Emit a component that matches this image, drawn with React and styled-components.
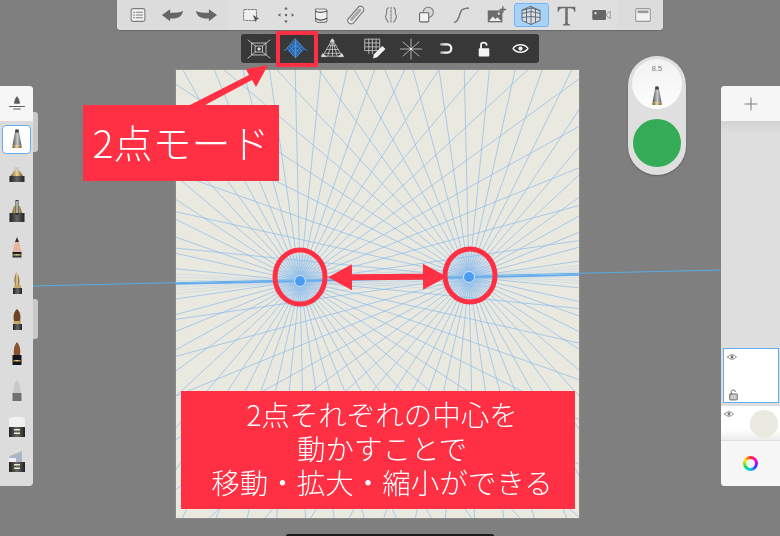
import React from "react";
import styled, { createGlobalStyle } from "styled-components";

const GlobalStyle = createGlobalStyle`
  html, body { margin: 0; padding: 0; background: #7f7f7f; }
`;

const RED = "#ff3044";
const GUIDE = "#8dbcec";

// paper local coordinates of the two vanishing points
const POINTS = [
  [124, 211],
  [293, 207],
];
const TILT = -1.3;

const ray = ([x, y], degrees, length) => {
  const a = ((degrees + TILT) * Math.PI) / 180;
  return `M${x} ${y}L${(x + Math.cos(a) * length).toFixed(1)} ${(y + Math.sin(a) * length).toFixed(1)}`;
};

const rayPath = (point, step, length) => {
  let d = "";
  const count = Math.round(360 / step);
  for (let i = 0; i < count; i++) d += ray(point, i * step, length);
  return d;
};

// the tight bundle along the horizon
const horizonFan = (point, length) => {
  let d = "";
  [-4.5, -3, -1.5, 1.5, 3, 4.5].forEach((a) => {
    d += ray(point, a, length) + ray(point, 180 + a, length);
  });
  return d;
};

const Stage = styled.div`
  position: relative;
  width: 780px;
  height: 536px;
  overflow: hidden;
  background: #7f7f7f;
  font-family: "Liberation Sans", "Noto Sans CJK JP", sans-serif;
  filter: blur(0.35px);
`;

const TopBar = styled.div`
  display: flex;
  width: 546px;
  height: 30px;
  margin: 0 auto 4px;
  border-radius: 0 0 4px 4px;
  background: #dfdfdf;
  box-shadow: 0 1px 1px rgba(0, 0, 0, 0.18);
  overflow: hidden;
`;

const BarGroup = styled.div`
  display: flex;
  align-items: center;
  width: ${(p) => p.$width}px;
  padding-left: ${(p) => p.$inset}px;
  box-sizing: border-box;
  background: ${(p) => (p.$shade ? "#dcdcdc" : "transparent")};
`;

const ToolButton = styled.div`
  display: flex;
  align-items: center;
  justify-content: center;
  flex: none;
  width: ${(p) => p.$size}px;
  height: 24px;
  box-sizing: border-box;
  border-radius: 3px;
  border: 1px solid ${(p) => (p.$active ? "#6fb4f3" : "transparent")};
  background: ${(p) => (p.$active ? "#a9d2f8" : "transparent")};
`;

const Workspace = styled.div`
  display: flex;
  align-items: flex-start;
`;

const SidePanel = styled.div`
  position: relative;
  z-index: 2;
  flex: none;
  width: ${(p) => p.$width}px;
  height: 400px;
  margin-top: 52px;
  margin-left: ${(p) => (p.$right ? "auto" : 0)};
  display: flex;
  flex-direction: column;
  background: #dcdcdc;
  border-radius: ${(p) => (p.$right ? "4px 0 0 4px" : "0 4px 4px 0")};
`;

const PanelHead = styled.div`
  display: flex;
  align-items: center;
  justify-content: center;
  height: 35px;
  flex: none;
  background: #f6f6f6;
  border-radius: inherit;
  border-bottom-left-radius: 0;
  border-bottom-right-radius: 0;
`;

const Grip = styled.div`
  position: absolute;
  left: 100%;
  top: ${(p) => p.$top}px;
  width: 5px;
  height: 40px;
  background: #c9c9c9;
  border-radius: 0 3px 3px 0;
`;

const NibList = styled.div`
  display: flex;
  flex-direction: column;
  align-items: center;
  padding-top: 3px;
`;

const NibSlot = styled.div`
  display: flex;
  align-items: center;
  justify-content: center;
  width: 29px;
  height: ${(p) => (p.$selected ? 29 : 35.7)}px;
  margin-top: ${(p) => (p.$selected ? 1 : 0)}px;
  margin-bottom: ${(p) => (p.$selected ? 4 : 0)}px;
  box-sizing: border-box;
  border-radius: 4px;
  border: ${(p) => (p.$selected ? "1.5px solid #62aef3" : "none")};
  background: ${(p) => (p.$selected ? "#fff" : "transparent")};
`;

const CenterColumn = styled.div`
  flex: none;
  width: 403px;
  margin-left: 143px;
`;

const ModeBar = styled.div`
  display: flex;
  align-items: center;
  width: 298px;
  height: 29px;
  margin-left: 65px;
  background: #383838;
  border-radius: 3px;
`;

const ModeButton = styled.div`
  position: relative;
  flex: none;
  width: 36.6px;
  height: 100%;
  display: flex;
  align-items: center;
  justify-content: center;
  &:nth-child(4) {
    margin-left: 5px;
  }
`;

const ModeMark = styled.div`
  position: absolute;
  left: -2px;
  right: -4px;
  top: -3px;
  bottom: -4px;
  z-index: 3;
  border: 4.5px solid ${RED};
`;

const Paper = styled.div`
  position: relative;
  width: 403px;
  height: 448px;
  margin-top: 7px;
  background: #eae9e0;
  box-shadow: 0 0 0 1px rgba(150, 150, 150, 0.5);
`;

const Guides = styled.svg`
  position: absolute;
  left: 0;
  top: 0;
  overflow: visible;
`;

const Puck = styled.div`
  flex: none;
  width: 58px;
  height: 119px;
  margin-left: 49px;
  margin-top: 22px;
  padding: 3px 4px;
  box-sizing: border-box;
  border-radius: 29px;
  background: #dfdfdf;
  box-shadow: 0 1px 2px rgba(0, 0, 0, 0.25);
  display: flex;
  flex-direction: column;
  align-items: center;
`;

const SizeDial = styled.div`
  width: 50px;
  height: 50px;
  flex: none;
  border-radius: 50%;
  background: linear-gradient(#f2f2f2, #fdfdfd);
  overflow: hidden;
  display: flex;
  flex-direction: column;
  align-items: center;
  gap: 9px;
`;

const SizeText = styled.div`
  font-size: 7.5px;
  line-height: 9px;
  margin-top: 5px;
  color: #777;
`;

const ColorDot = styled.div`
  width: 48px;
  height: 48px;
  flex: none;
  margin-top: 10px;
  border-radius: 50%;
  background: #34ab57;
`;

const LayerStack = styled.div`
  flex: 1;
  display: flex;
  flex-direction: column;
  justify-content: flex-end;
  background: linear-gradient(#d2d2d2, #dedede 12px);
`;

const Layer = styled.div`
  position: relative;
  height: ${(p) => p.$height}px;
  margin-left: ${(p) => (p.$active ? 2 : 0)}px;
  margin-right: ${(p) => (p.$active ? 1 : 0)}px;
  margin-bottom: ${(p) => (p.$active ? 3 : 1)}px;
  box-sizing: border-box;
  background: ${(p) => (p.$active ? "#fff" : "linear-gradient(#fff 70%, #ececec)")};
  border: ${(p) => (p.$active ? "1.5px solid #62aef3" : "none")};
  display: flex;
  flex-direction: column;
  justify-content: space-between;
  padding: 3px 0 1px 3px;
`;

const Swatch = styled.div`
  position: absolute;
  right: 2px;
  top: 4px;
  width: 28px;
  height: 28px;
  border-radius: 50%;
  background: #eae9e0;
`;

const PanelFoot = styled.div`
  height: 45px;
  flex: none;
  display: flex;
  align-items: center;
  justify-content: center;
  background: #f7f7f7;
  border-bottom-left-radius: 4px;
`;

const Wheel = styled.div`
  width: 15px;
  height: 15px;
  border-radius: 50%;
  background: conic-gradient(#ff2a2a, #ff00d4, #4a2cff, #00c8ff, #18d848, #ffe600, #ff2a2a);
  display: flex;
  align-items: center;
  justify-content: center;
  &::after {
    content: "";
    width: 9px;
    height: 9px;
    border-radius: 50%;
    background: #f7f7f7;
  }
`;

const Annotations = styled.svg`
  position: absolute;
  left: 0;
  top: 0;
  z-index: 3;
  pointer-events: none;
`;

const Callout = styled.div`
  position: absolute;
  z-index: 4;
  left: ${(p) => p.$left}px;
  top: ${(p) => p.$top}px;
  width: ${(p) => p.$width}px;
  height: ${(p) => p.$height}px;
  padding: 0 0 5px ${(p) => p.$shift || 0}px;
  box-sizing: border-box;
  display: flex;
  flex-direction: column;
  align-items: center;
  justify-content: center;
  background: ${RED};
  color: #fff;
  font-family: "Noto Sans CJK JP", "Liberation Sans", sans-serif;
  font-size: ${(p) => p.$size}px;
  font-weight: 300;
  line-height: ${(p) => p.$leading}px;
  white-space: nowrap;
`;

const HomeBar = styled.div`
  position: absolute;
  left: 286px;
  bottom: 0;
  width: 208px;
  height: 2px;
  border-radius: 2px 2px 0 0;
  background: #1c1c1c;
`;

const Icon = ({ children, size = 22, fill = "none", stroke = "#7c7c7c", width = 1.2 }) => (
  <svg width={size} height={size} viewBox="0 0 24 24" fill={fill} stroke={stroke} strokeWidth={width} strokeLinecap="round" strokeLinejoin="round">
    {children}
  </svg>
);

const topLeftIcons = [
  <Icon key="list">
    <rect x="4.5" y="5" width="15" height="14" rx="2" fill="#f2f2f2" />
    <path d="M7 9h1.2M10 9h7M7 12h1.2M10 12h7M7 15h1.2M10 15h7" />
  </Icon>,
  <Icon key="undo" fill="#666" stroke="none" size={23}>
    <path d="M1 11.5L9.5 5.5V9.2C15 9.200 20 9 23 7C22 13.500 17 15.600 9.500 15V18Z" />
  </Icon>,
  <Icon key="redo" fill="#666" stroke="none" size={23}>
    <path d="M23 11.500L14.500 5.500V9.200C9 9.200 4 9 1 7C2 13.500 7 15.600 14.500 15V18Z" />
  </Icon>,
];

const toolIcons = [
  <Icon key="select">
    <rect x="4" y="6" width="14" height="12" rx="1.500" fill="#efefef" strokeDasharray="2 1.600" />
    <path d="M14 12l7 4-3 1-1 3z" fill="#555" stroke="none" />
  </Icon>,
  <Icon key="move" fill="#666" stroke="none">
    <circle cx="12" cy="12" r="1.300" />
    <path d="M12 3l2 3h-4zM12 21l2-3h-4zM3 12l3-2v4zM21 12l-3-2v4z" />
  </Icon>,
  <Icon key="stack">
    <path d="M6 5.500h10c1.500 0 2.500 1 2.500 2.500v9.500c0 1.500-1 2.500-3 2.500h-6.500c-2 0-3-1-3-2.500z" fill="#eee" />
    <path d="M6 8c3 1.500 7 1.500 12.500 0M6 15.500c3 2.500 8 2.500 12.500 0" stroke="#555" />
  </Icon>,
  <Icon key="ruler" size={24}>
    <path d="M4 16L15 3.500c2.500-1.500 6 1.500 4.500 4.500L9 20.500c-3 1.500-6.500-1.500-5-4.500z" fill="#e8e8e8" strokeDasharray="2 1" />
    <path d="M7.500 16.500L16 7" stroke="#a8a8a8" strokeWidth="3" />
  </Icon>,
  <Icon key="symmetry">
    <path d="M12 3.500v17" strokeDasharray="2 1.500" />
    <path d="M9 4C5 6 9 9 6.500 12C4.500 15 8.500 18 9 20M15 4c4 2 0 5 2.500 8c2 3-2 6-2.500 8" />
  </Icon>,
  <Icon key="shapes">
    <circle cx="14.500" cy="9" r="5.500" fill="#d8d8d8" />
    <rect x="5" y="9.500" width="10" height="10" rx="1" fill="#f4f4f4" stroke="#666" />
  </Icon>,
  <Icon key="curve" stroke="#777" width="1.700">
    <path d="M5 20C10 20 10 9 13 6.500C15 5 17 5 20 4.500" />
  </Icon>,
  <Icon key="image" fill="#666" stroke="none">
    <rect x="3" y="7" width="16" height="13" fill="#6d6d6d" />
    <path d="M4.500 18.500l4-5 3 3 2-2 4 4z" fill="#f0f0f0" />
    <circle cx="15" cy="10.500" r="1.200" fill="#f0f0f0" />
    <path d="M19.500 3v6M16.500 6h6" stroke="#666" strokeWidth="1.400" />
  </Icon>,
  <Icon key="perspective" stroke="#5f6d78" width="1" size={24}>
    <path d="M12 3.500L21 7.500V17.500L12 21.500L3 17.500V7.500Z" fill="#d8dde0" />
    <path d="M12 3.500V21.500M7.500 5.500V19.500M16.500 5.500V19.500M3 10.500L12 8.500L21 10.500M3 14.500L12 13.500L21 14.500M3 7.500L12 5L21 7.500" />
  </Icon>,
  <Icon key="text" fill="#6d6d6d" stroke="none" size={25}>
    <path d="M3.500 3.500H20.500V8.500H19.500C19 6 18 5 15.500 5H13.200V19C13.200 20 14 20.500 15.500 20.500V21.500H8.500V20.500C10 20.500 10.800 20 10.800 19V5H8.500C6 5 5 6 4.500 8.500H3.500Z" />
  </Icon>,
  <Icon key="video" fill="#666" stroke="none">
    <rect x="2.500" y="6.500" width="15" height="11" rx="1.500" />
    <circle cx="6" cy="10" r="1.200" fill="#eee" />
    <path d="M18.500 11l3.500-3v8l-3.500-3z" fill="#eee" stroke="#777" strokeWidth="0.800" />
  </Icon>,
];

const frameIcon = (
  <Icon key="frame">
    <rect x="4" y="5" width="16" height="14" rx="1.500" fill="#f2f2f2" stroke="#9a9a9a" />
    <rect x="6" y="7" width="12" height="3" fill="#9a9a9a" stroke="none" />
  </Icon>
);

const modeIcons = [
  <Icon key="one" stroke="#d8d8d8" width="0.800" size={24}>
    <rect x="5" y="6" width="14" height="12" />
    <rect x="8.500" y="9" width="7" height="6" />
    <circle cx="12" cy="12" r="1.200" fill="#e6e6e6" />
    <path d="M1 3L8.500 9M23 3L15.500 9M1 21L8.500 15M23 21L15.500 15" />
  </Icon>,
  <Icon key="two" stroke="#4a97e6" width="0.800" size={25}>
    <path d="M12 3L20 12L12 21L4 12Z" fill="#2a5f9a" />
    <path d="M8 7.500L16 16.500M16 7.500L8 16.500M6 9.500L14 18.500M18 9.500L10 18.500M10 5.500L18 14.500M14 5.500L6 14.500M12 3V21M1 14L4 12M23 14L20 12" />
  </Icon>,
  <Icon key="three" stroke="#cfcfcf" width="0.800" size={23}>
    <path d="M12 3L22 20H2Z" />
    <path d="M12 3V20M12 3L7 20M12 3L17 20M8.500 9H15.500M6 13H18M4 17H20" />
    <path d="M12 2l2 2.500h-4zM2 17.500l3.500 3H.5zM22 17.500l1.500 3h-5z" fill="#eee" />
  </Icon>,
  <Icon key="four" stroke="#c8c8c8" width="0.800" size={25}>
    <path d="M3 3H17V14H3ZM3 6.700H17M3 10.400H17M6.500 3V17M10 3V17M13.500 3V14" />
    <path d="M10.500 21.500L11.500 17.500L19.500 9.500L22.500 12.500L14.500 20.500Z" fill="#f2f2f2" stroke="none" />
  </Icon>,
  <Icon key="five" stroke="#cfcfcf" width="0.800" size={24}>
    <path d="M1.500 12H22.500M12 2V22M4 5L20 19M20 5L4 19" />
    <circle cx="12" cy="12" r="1" fill="#fff" stroke="none" />
  </Icon>,
  <Icon key="magnet" stroke="#f2f2f2" width="3.600" size={15}>
    <path d="M6 5.500H12C20 5.500 20 18.500 12 18.500H6" />
    <path d="M2 5.500H5M2 18.500H5" stroke="#c4c4c4" />
  </Icon>,
  <Icon key="lock" fill="#f4f4f4" stroke="none" size={18}>
    <rect x="5" y="11" width="14" height="11" rx="1" />
    <path d="M8 11V6.500C8 2.500 15 2.500 15.500 6.500" fill="none" stroke="#f4f4f4" strokeWidth="2.400" />
  </Icon>,
  <Icon key="eye" stroke="#f4f4f4" width="2" size={17}>
    <path d="M1.500 12C6 5 18 5 22.500 12C18 19 6 19 1.500 12Z" />
    <circle cx="12" cy="12" r="3" fill="#f4f4f4" stroke="none" />
  </Icon>,
];

const SmallEye = () => (
  <Icon size={10} stroke="#777" width="2.200">
    <path d="M1.500 12C6 5 18 5 22.500 12C18 19 6 19 1.500 12Z" />
    <circle cx="12" cy="12" r="3.500" fill="#777" stroke="none" />
  </Icon>
);

const SmallLock = () => (
  <Icon size={13} stroke="#666" width="1.800">
    <rect x="5" y="11" width="14" height="11" rx="1" fill="#ccc" strokeDasharray="2 1.500" />
    <path d="M8 11V6.500C8 2.500 15 2.500 15.500 6.500" />
  </Icon>
);

// one entry per brush, each a list of [path, fill]
const NIBS = [
  [["M10.500 4.500h3l.800 4 2.200 12H7.500l2.200-12z", "url(#metal)"], ["M7.500 20.500h9v2.500h-9z", "url(#gold)"], ["M10.500 4.500h3l.500 3h-4z", "#444"]],
  [["M9.500 6h4.500l1 5H8.500z", "#c8c8c8"], ["M8.500 11c1-2 6-2 7 0l2.500 4H5.500z", "url(#gold)"], ["M4.500 15h15v6h-15z", "url(#dark)"]],
  [["M9 9h6l2 7H7z", "url(#gold)"], ["M4.500 16h15v9h-15z", "url(#dark)"], ["M10.500 3h3v15h-3z", "#333"], ["M11.300 4h1.400v12h-1.400z", "#ddd"]],
  [["M12 5l2 5h-4z", "#3a2e28"], ["M10 10h4l2.500 10h-9z", "#e6b79e"], ["M7.500 20h9v2h-9z", "#1f1f1f"], ["M7.500 22h9v1.500h-9z", "url(#gold)"], ["M7.500 23.500h9v2h-9z", "#333"]],
  [["M11.500 4c2.500 3 3.500 8 2.500 13h-4c-1-5-.5-10 1.500-13z", "url(#gold)"], ["M9 17h7v3H9z", "#c7a86a"], ["M8 20h9v6H8z", "url(#dark)"]],
  [["M12 5c3.500 3 4 8 3 12H9c-1-4-.5-9 3-12z", "#6d4326"], ["M8.500 17h7.500v3H8.500z", "#c9a968"], ["M8 20h9v6H8z", "url(#dark)"]],
  [["M12 3c3.500 4 3.500 9 3 13H9c-.5-4-.5-9 3-13z", "#8a5230"], ["M7.500 16h9v10h-9z", "#14141c"], ["M7.500 21h9v1.500h-9z", "url(#gold)"]],
  [["M12 5c3 3 4 8 3.500 13h-7C8 13 9 8 12 5z", "#c9c9c9"], ["M7.500 18h9v8h-9z", "#707070"]],
  [["M7 6h10l3 2v8H4V8z", "#f1f1f1"], ["M4 16h16v10H4z", "url(#dark)"], ["M9 18h6v1.500H9zM9 21.500h6v1.500H9z", "#efe8c8"]],
  [["M7 9l10-4v11H4v-5z", "#aab6c4"], ["M4 12h7v4H4z", "#f1f1f1"], ["M4 16h16v10H4z", "url(#dark)"], ["M9 18h6v1.500H9zM9 21.500h6v1.500H9z", "#efe8c8"]],
];

const Nib = ({ parts }) => (
  <svg width="24" height="30" viewBox="0 0 24 30" style={{ flex: "none" }}>
    {parts.map(([d, fill]) => (
      <path key={d} d={d} fill={fill} />
    ))}
  </svg>
);

const NibGradients = () => (
  <svg width="0" height="0" style={{ position: "absolute" }}>
    <defs>
      <linearGradient id="metal">
        <stop offset="0" stopColor="#4d4d4d" />
        <stop offset="0.55" stopColor="#c9c9c9" />
        <stop offset="1" stopColor="#555" />
      </linearGradient>
      <linearGradient id="gold">
        <stop offset="0" stopColor="#6d5426" />
        <stop offset="0.5" stopColor="#ecd696" />
        <stop offset="1" stopColor="#6d5426" />
      </linearGradient>
      <linearGradient id="dark">
        <stop offset="0" stopColor="#222" />
        <stop offset="0.5" stopColor="#666" />
        <stop offset="1" stopColor="#222" />
      </linearGradient>
    </defs>
  </svg>
);

const PerspectiveGuides = () => (
  <Guides width="403" height="448">
    <defs>
      <clipPath id="paper-clip">
        <rect width="403" height="448" />
      </clipPath>
    </defs>
    <path d="M-143 216L545 200" stroke="#55aee6" strokeWidth="1" fill="none" />
    <g clipPath="url(#paper-clip)" fill="none">
      {POINTS.map((point) => (
        <g key={point[0]}>
          <path d={rayPath(point, 360 / 52, 700)} stroke={GUIDE} strokeWidth="0.900" opacity="0.8" />
          <path d={horizonFan(point, 190)} stroke={GUIDE} strokeWidth="0.500" opacity="0.5" />
          <path d={rayPath(point, 2.400, 27)} stroke={GUIDE} strokeWidth="0.500" opacity="0.55" />
        </g>
      ))}
      <path d="M0 214L403 205" stroke="#62aaf0" strokeWidth="1.600" />
    </g>
    {POINTS.map(([x, y]) => (
      <circle key={x} cx={x} cy={y} r="5.500" fill="#4b9cf0" stroke="#d4e6f8" strokeWidth="1" />
    ))}
  </Guides>
);

const Markup = () => (
  <Annotations width="780" height="536" fill="none">
    <ellipse cx="300" cy="277" rx="25" ry="27" stroke={RED} strokeWidth="5" />
    <ellipse cx="470" cy="275.500" rx="25" ry="26.500" stroke={RED} strokeWidth="5" />
    <path d="M328 277L352 264V274H423V264L447 277L423 290V280H352V290Z" fill={RED} transform="rotate(-0.3 388 277)" />
    <path d="M184 108L190 113L252 80L256 87L268 65L246 69L249 75Z" fill={RED} />
  </Annotations>
);

const App = () => {
  return (
    <>
      <GlobalStyle />
      <NibGradients />
      <Stage>
        <TopBar>
          <BarGroup $width={111} $inset={4} $shade>
            {topLeftIcons.map((icon) => (
              <ToolButton key={icon.key} $size={34}>
                {icon}
              </ToolButton>
            ))}
          </BarGroup>
          <BarGroup $width={389} $inset={5}>
            {toolIcons.map((icon) => (
              <ToolButton key={icon.key} $size={35.100} $active={icon.key === "perspective"}>
                {icon}
              </ToolButton>
            ))}
          </BarGroup>
          <BarGroup $width={46} $inset={6} $shade>
            <ToolButton $size={40}>{frameIcon}</ToolButton>
          </BarGroup>
        </TopBar>

        <Workspace>
          <SidePanel $width={33}>
            <PanelHead>
              <Icon size={20} fill="#5d5d5d" stroke="#5d5d5d">
                <path d="M12 4c2 1 2 3 3 7H9c1-4 1-6 3-7z" />
                <path d="M3 15H21M8 18H16" fill="none" strokeWidth="1.400" />
              </Icon>
            </PanelHead>
            <NibList>
              {NIBS.map((parts, i) => (
                <NibSlot key={i} $selected={i === 0}>
                  <Nib parts={parts} />
                </NibSlot>
              ))}
            </NibList>
            <Grip $top={26} />
            <Grip $top={213} />
          </SidePanel>

          <CenterColumn>
            <ModeBar>
              {modeIcons.map((icon) => (
                <ModeButton key={icon.key}>
                  {icon}
                  {icon.key === "two" && <ModeMark />}
                </ModeButton>
              ))}
            </ModeBar>
            <Paper>
              <PerspectiveGuides />
            </Paper>
          </CenterColumn>

          <Puck>
            <SizeDial>
              <SizeText>8.5</SizeText>
              <Nib parts={NIBS[0]} />
            </SizeDial>
            <ColorDot />
          </Puck>

          <SidePanel $width={59} $right>
            <PanelHead>
              <Icon size={18} stroke="#777" width="1.300">
                <path d="M12 4V20M4 12H20" />
              </Icon>
            </PanelHead>
            <LayerStack>
              <Layer $height={55} $active>
                <SmallEye />
                <SmallLock />
              </Layer>
              <Layer $height={34}>
                <SmallEye />
                <Swatch />
              </Layer>
            </LayerStack>
            <PanelFoot>
              <Wheel />
            </PanelFoot>
          </SidePanel>
        </Workspace>

        <Markup />

        <Callout $left={83} $top={105} $width={196} $height={76} $size={39} $leading={44}>
          2点モード
        </Callout>
        <Callout $left={181} $top={391} $width={394} $height={118} $size={28.500} $leading={34} $shift={8}>
          <div>2点それぞれの中心を</div>
          <div>動かすことで</div>
          <div>移動・拡大・縮小ができる</div>
        </Callout>
        <HomeBar />
      </Stage>
    </>
  );
};

export default App;
